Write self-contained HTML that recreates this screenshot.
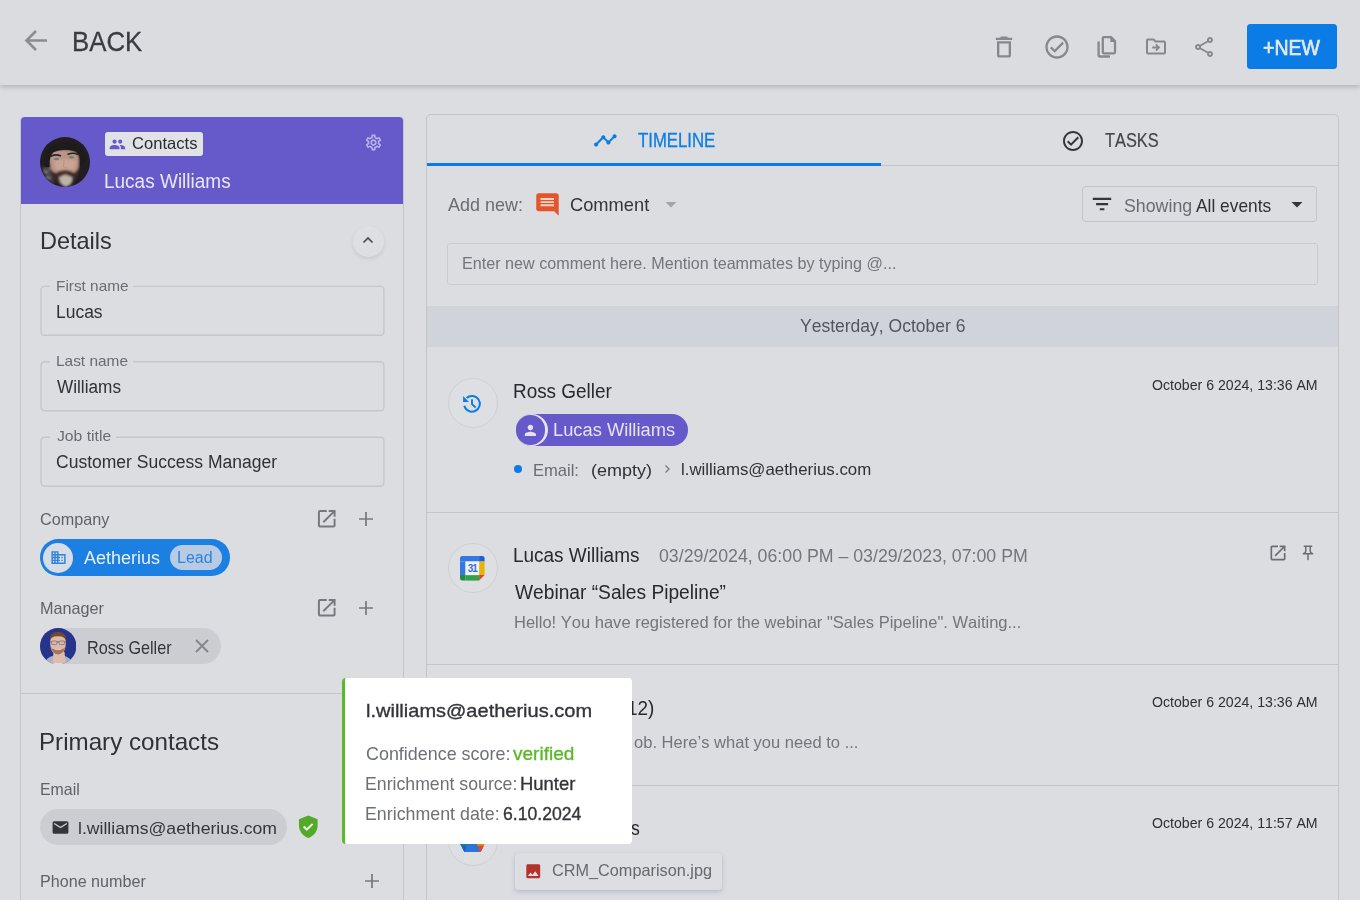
<!DOCTYPE html>
<html>
<head>
<meta charset="utf-8">
<style>
*{box-sizing:border-box;margin:0;padding:0}
html,body{width:1360px;height:900px;overflow:hidden;background:#dcdde0;font-family:"Liberation Sans",sans-serif;color:#2d2e33}
.a{position:absolute;white-space:nowrap;line-height:1;font-kerning:none}
svg{display:block}
#top{position:absolute;left:0;top:0;width:1360px;height:85px;background:#dbdcdf;box-shadow:0 2px 5px rgba(0,0,0,.19)}
#left{position:absolute;left:20px;top:117px;width:384px;height:800px;border:1px solid #c3c5ca;border-top:none;border-radius:4px 4px 0 0}
#lhead{position:absolute;left:21px;top:117px;width:382px;height:87px;background:#665acb;border-radius:4px 4px 0 0}
#right{position:absolute;left:426px;top:114px;width:913px;height:800px;border:1px solid #c3c5ca;border-radius:5px 5px 0 0}
.hl{position:absolute;height:1px;background:#c3c5ca}
.field{position:absolute;left:40px;width:345px;height:49px;border:1px solid #bfc1c6;border-radius:3px}
.flabel{position:absolute;background:#dcdde0;color:#6a6c73;font-size:15px;line-height:1;padding:0 6px;white-space:nowrap}
.g{color:#6a6c73}
.ic{width:50px;height:50px;border-radius:50%;border:1px solid #cfd0d4;background:#dedfe2}
.t20{color:#28292e}
.t17{}
.dt{color:#2e2f33}
.pl{color:#6e7079}
.pb{color:#34353a;-webkit-text-stroke:.35px currentColor}
.fl{color:#6a6c73}
.fv{color:#303136}
.sl{color:#606268}
#back{left:71.89px;top:27.50px;font-size:28px;transform:scaleX(0.9207);transform-origin:0 0}
#contacts{left:131.66px;top:134.75px;font-size:16.5px;transform:scaleX(1.0050);transform-origin:0 0}
#lname{left:104.14px;top:171.00px;font-size:20px;transform:scaleX(0.9496);transform-origin:0 0}
#details{left:39.77px;top:228.50px;font-size:24px;transform:scaleX(0.9784);transform-origin:0 0}
#fl1{left:55.84px;top:278.75px;font-size:14.5px;transform:scaleX(1.0592);transform-origin:0 0}
#fv1{left:55.67px;top:303.00px;font-size:18px;transform:scaleX(0.9694);transform-origin:0 0}
#fl2{left:55.84px;top:353.75px;font-size:14.5px;transform:scaleX(1.0627);transform-origin:0 0}
#fv2{left:57.02px;top:378.00px;font-size:18px;transform:scaleX(0.9553);transform-origin:0 0}
#fl3{left:56.85px;top:428.75px;font-size:14.5px;transform:scaleX(1.0835);transform-origin:0 0}
#fv3{left:56.21px;top:453.00px;font-size:18px;transform:scaleX(0.9735);transform-origin:0 0}
#company{left:40.18px;top:510.75px;font-size:16.5px;transform:scaleX(0.9836);transform-origin:0 0}
#aeth{left:84.36px;top:549.00px;font-size:18px;transform:scaleX(0.9979);transform-origin:0 0}
#lead{left:177.09px;top:549.50px;font-size:16px;transform:scaleX(0.9985);transform-origin:0 0}
#manager{left:39.67px;top:599.75px;font-size:16.5px;transform:scaleX(0.9828);transform-origin:0 0}
#ross{left:86.67px;top:639.25px;font-size:18.5px;transform:scaleX(0.8754);transform-origin:0 0}
#primary{left:38.92px;top:729.50px;font-size:24px;transform:scaleX(1.0070);transform-origin:0 0}
#emaill{left:39.60px;top:780.75px;font-size:16.5px;transform:scaleX(0.9639);transform-origin:0 0}
#email1{left:77.81px;top:820.00px;font-size:17px;transform:scaleX(1.0365);transform-origin:0 0}
#phone{left:39.58px;top:872.75px;font-size:16.5px;transform:scaleX(0.9774);transform-origin:0 0}
#timeline{left:637.72px;top:130.75px;font-size:19.5px;transform:scaleX(0.8595);transform-origin:0 0}
#tasks{left:1105.13px;top:130.75px;font-size:19.5px;transform:scaleX(0.8402);transform-origin:0 0}
#addnew{left:447.66px;top:195.00px;font-size:19px;transform:scaleX(0.9452);transform-origin:0 0}
#comment{left:570.47px;top:195.00px;font-size:19px;transform:scaleX(0.9624);transform-origin:0 0}
#showing{left:1123.79px;top:196.00px;font-size:19px;transform:scaleX(0.9351);transform-origin:0 0}
#allev{left:1196.27px;top:196.00px;font-size:19px;transform:scaleX(0.9124);transform-origin:0 0}
#placeholder{left:462.18px;top:254.75px;font-size:16.5px;transform:scaleX(0.9781);transform-origin:0 0}
#yesterday{left:799.72px;top:318.25px;font-size:17.5px;transform:scaleX(1.0006);transform-origin:0 0}
#ross2{left:513.05px;top:382.25px;font-size:19.5px;transform:scaleX(0.9696);transform-origin:0 0}
#lw2{left:552.80px;top:421.00px;font-size:18px;transform:scaleX(1.0170);transform-origin:0 0}
#emailk{left:533.24px;top:462.00px;font-size:17px;transform:scaleX(0.9732);transform-origin:0 0}
#empty{left:591.49px;top:462.00px;font-size:17px;transform:scaleX(1.0575);transform-origin:0 0}
#email2{left:681.27px;top:460.75px;font-size:16.5px;transform:scaleX(1.0207);transform-origin:0 0}
#lw3{left:513.44px;top:546.25px;font-size:19.5px;transform:scaleX(0.9724);transform-origin:0 0}
#range{left:659.21px;top:548.25px;font-size:17.5px;transform:scaleX(1.0134);transform-origin:0 0}
#webinar{left:514.92px;top:583.25px;font-size:19.5px;transform:scaleX(0.9832);transform-origin:0 0}
#hello{left:513.65px;top:613.75px;font-size:16.5px;transform:scaleX(1.0006);transform-origin:0 0}
#ptitle{left:365.55px;top:702.25px;font-size:18.5px;transform:scaleX(1.0818);transform-origin:0 0}
#p1a{left:365.99px;top:744.00px;font-size:19px;transform:scaleX(0.9426);transform-origin:0 0}
#p1b{left:513.14px;top:744.00px;font-size:19px;transform:scaleX(1.0007);transform-origin:0 0}
#p2a{left:365.45px;top:774.00px;font-size:19px;transform:scaleX(0.9309);transform-origin:0 0}
#p2b{left:520.39px;top:774.00px;font-size:19px;transform:scaleX(0.9718);transform-origin:0 0}
#p3a{left:365.44px;top:804.00px;font-size:19px;transform:scaleX(0.9370);transform-origin:0 0}
#p3b{left:502.80px;top:804.00px;font-size:19px;transform:scaleX(0.9277);transform-origin:0 0}
#e3t{left:627.33px;top:699.25px;font-size:19.5px;transform:scaleX(0.9700);transform-origin:0 0}
#e3b{left:633.74px;top:733.75px;font-size:16.5px;transform:scaleX(1.0030);transform-origin:0 0}
#e4t{left:631.41px;top:819.25px;font-size:19.5px;transform:scaleX(0.9056);transform-origin:0 0}
#newtxt{left:1262.65px;top:36.50px;font-size:22px;transform:scaleX(0.8854);transform-origin:0 0}
#d1{left:1152.23px;top:377.75px;font-size:14.5px;transform:scaleX(0.9738);transform-origin:0 0}
#d3{left:1152.23px;top:694.75px;font-size:14.5px;transform:scaleX(0.9738);transform-origin:0 0}
#d4{left:1152.23px;top:815.75px;font-size:14.5px;transform:scaleX(0.9738);transform-origin:0 0}
#crm{left:552.37px;top:861.75px;font-size:16.5px;transform:scaleX(0.9856);transform-origin:0 0}
</style>
</head>
<body>
<!-- TOP BAR -->
<div id="top"></div>
<svg class="a" style="left:24px;top:28px" width="25" height="25" viewBox="0 0 25 25"><path d="M23 12.5H3M12 3L2.5 12.5L12 22" fill="none" stroke="#8b8c91" stroke-width="2.6"/></svg>
<div class="a" id="back" style="color:#3a3b40;-webkit-text-stroke:.3px #3a3b40">BACK</div>
<!-- trash -->
<svg class="a" style="left:990px;top:32.500px" width="28" height="28" viewBox="0 0 24 24"><path fill="#87888d" d="M15 4V3H9v1H5v2h14V4h-4zM6 19c0 1.100.9 2 2 2h8c1.100 0 2-.9 2-2V7H6v12zM8 9h8v10H8V9z"/></svg>
<!-- check circle -->
<svg class="a" style="left:1043px;top:32.500px" width="28" height="28" viewBox="0 0 24 24"><path fill="#87888d" d="M12 2C6.480 2 2 6.480 2 12s4.480 10 10 10 10-4.480 10-10S17.520 2 12 2zm0 18c-4.410 0-8-3.590-8-8s3.590-8 8-8 8 3.590 8 8-3.590 8-8 8zm4.590-12.420L10 14.170l-2.590-2.580L6 13l4 4 8-8-1.410-1.420z"/></svg>
<!-- copy -->
<svg class="a" style="left:1094px;top:33px" width="26" height="28" viewBox="0 0 26 28"><path d="M9.800 4.100h7.200l4 4v11.200a1 1 0 0 1-1 1H9.800a1 1 0 0 1-1-1V5.100a1 1 0 0 1 1-1z" fill="none" stroke="#87888d" stroke-width="2.300" stroke-linejoin="round"/><path d="M16.300 3.500l5.500 5.500h-5.500z" fill="#87888d"/><path d="M4.600 8.500v14a1 1 0 0 0 1 1H16" fill="none" stroke="#87888d" stroke-width="2.300"/></svg>
<!-- folder move -->
<svg class="a" style="left:1143.800px;top:36.400px" width="24" height="24" viewBox="0 0 24 24"><g transform="translate(0 -1.500)"><path fill="#87888d" d="M20 6h-8l-2-2H4c-1.100 0-1.990.9-1.990 2L2 18c0 1.100.9 2 2 2h16c1.100 0 2-.9 2-2V8c0-1.100-.9-2-2-2zm0 12H4V6h5.170l2 2H20v10z"/><path d="M8.200 13h6.500M11.800 9.800L15 13l-3.200 3.200" fill="none" stroke="#87888d" stroke-width="1.800"/></g></svg>
<!-- share -->
<svg class="a" style="left:1192px;top:34.600px" width="24" height="24" viewBox="0 0 24 24"><path fill="#87888d" d="M18 16.080c-.760 0-1.440.3-1.960.770L8.910 12.700c.050-.230.090-.460.090-.7s-.040-.470-.090-.7l7.050-4.110c.540.5 1.250.810 2.040.810 1.660 0 3-1.340 3-3s-1.340-3-3-3-3 1.340-3 3c0 .240.040.470.090.7L8.040 9.810C7.500 9.310 6.790 9 6 9c-1.660 0-3 1.340-3 3s1.340 3 3 3c.790 0 1.500-.310 2.040-.810l7.120 4.160c-.050.210-.080.430-.080.650 0 1.610 1.310 2.920 2.920 2.920s2.920-1.310 2.920-2.920-1.310-2.920-2.920-2.920zM18 4c.550 0 1 .450 1 1s-.450 1-1 1-1-.450-1-1 .450-1 1-1zM6 13c-.550 0-1-.450-1-1s.450-1 1-1 1 .450 1 1-.450 1-1 1zm12 7.020c-.550 0-1-.450-1-1s.450-1 1-1 1 .450 1 1-.450 1-1 1z"/></svg>
<div class="a" style="left:1246.500px;top:24.200px;width:90.600px;height:44.600px;background:#0b7ce5;border-radius:3.500px"></div><div class="a" id="newtxt" style="color:#e4e8f0;-webkit-text-stroke:.7px #e4e8f0">+NEW</div>

<!-- LEFT CARD -->
<div id="left"></div>
<div id="lhead"></div>
<!-- avatar 1 -->
<svg class="a" style="left:40.400px;top:137px" width="50" height="50" viewBox="0 0 50 50">
<defs><clipPath id="c1"><circle cx="25" cy="25" r="25"/></clipPath>
<filter id="b1" x="-20%" y="-20%" width="140%" height="140%"><feGaussianBlur stdDeviation="1.100"/></filter>
<filter id="b1s" x="-20%" y="-20%" width="140%" height="140%"><feGaussianBlur stdDeviation=".6"/></filter></defs>
<g clip-path="url(#c1)"><rect width="50" height="50" fill="#211d20"/>
<g filter="url(#b1)">
<path d="M2 30Q4 40 14 47L10 30Z" fill="#4b4a48"/>
<path d="M4 34l3 2M6 40l4 2M9 31l2 4" stroke="#a9a8a2" stroke-width="1.300"/>
<path d="M8.500 19Q9 12 24 12.500Q38 12 39 20Q40 30 37 38Q33 46 26 48Q17 47 12 36Q9 28 8.500 19Z" fill="#ba9485"/>
<path d="M14 24Q24 21 36 24Q35 30 33 33L17 33Q14 29 14 24Z" fill="#caa595"/>
<path d="M9 30Q11 42 20 48L30 49Q38 44 39 30Q36 36 32 36Q25 31.500 18 36Q13 36 9 30Z" fill="#3b2c27"/>
<path d="M17 36Q25 31 33 36Q30 34.500 25 35Q20 34.500 17 36Z" fill="#553a2e" stroke="#553a2e" stroke-width="1.500"/>
<path d="M19 40Q25 37 32 40Q33 47 26 50Q20 48 19 40Z" fill="#bdb3a8"/>
<path d="M21.500 38.200Q25.500 37 29.500 38.200Q25.500 39.800 21.500 38.200Z" fill="#c79a8c"/>
</g>
<g filter="url(#b1s)">
<path d="M4 22Q6 6 25 5Q44 6 46 24L40 30Q41 17 36 14.500Q25 11 14 15Q9 18 9.500 30L5 30Z" fill="#1f1b1e"/>
<path d="M10 19.500Q15 16.500 21 19" stroke="#2e221e" stroke-width="1.700" fill="none"/>
<path d="M27.500 17.500Q33 15 38 17.500" stroke="#2e221e" stroke-width="1.700" fill="none"/>
<ellipse cx="16.500" cy="22" rx="2.600" ry="1.200" fill="#6b8088"/>
<ellipse cx="31.500" cy="20.200" rx="2.600" ry="1.200" fill="#6b8088"/>
<path d="M24 23L23.500 30Q25 31.500 27.500 30" stroke="#a8806f" stroke-width=".8" fill="none" opacity=".7"/>
</g>
</g></svg>
<!-- contacts chip -->
<div class="a" style="left:105px;top:132px;width:98px;height:24px;background:#e1e2e5;border-radius:3px"></div>
<svg class="a" style="left:109.200px;top:135.800px" width="16.800" height="16.800" viewBox="0 0 24 24"><path fill="#665acb" d="M16 11c1.660 0 2.990-1.340 2.990-3S17.660 5 16 5c-1.660 0-3 1.340-3 3s1.340 3 3 3zm-8 0c1.660 0 2.990-1.340 2.990-3S9.660 5 8 5C6.340 5 5 6.340 5 8s1.340 3 3 3zm0 2c-2.330 0-7 1.170-7 3.500V19h14v-2.500c0-2.330-4.670-3.500-7-3.500zm8 0c-.290 0-.620.020-.970.050 1.160.840 1.970 1.970 1.970 3.450V19h6v-2.500c0-2.330-4.670-3.500-7-3.500z"/></svg>
<div class="a" id="contacts" style="color:#2b2c31">Contacts</div>
<!-- gear -->
<svg class="a" style="left:364px;top:133px" width="19" height="19" viewBox="0 0 24 24"><path fill="#b9b3ea" d="M19.430 12.980c.040-.320.070-.640.070-.980 0-.340-.030-.660-.070-.980l2.110-1.650c.190-.150.240-.420.120-.640l-2-3.460c-.090-.160-.260-.250-.440-.250-.060 0-.120.010-.170.030l-2.490 1c-.520-.4-1.080-.730-1.690-.980l-.380-2.650C14.460 2.180 14.250 2 14 2h-4c-.250 0-.460.180-.490.420l-.380 2.650c-.610.250-1.170.590-1.690.980l-2.490-1c-.060-.020-.120-.030-.180-.030-.170 0-.340.090-.430.250l-2 3.460c-.130.220-.070.490.120.640l2.110 1.650c-.040.320-.070.650-.070.980 0 .330.030.660.070.980l-2.110 1.650c-.190.150-.240.420-.120.640l2 3.460c.090.160.260.250.440.250.060 0 .120-.010.170-.030l2.490-1c.520.4 1.080.730 1.690.980l.380 2.650c.030.240.240.420.490.420h4c.250 0 .460-.180.490-.420l.380-2.650c.610-.250 1.170-.590 1.690-.980l2.490 1c.060.020.120.030.180.030.170 0 .340-.090.430-.250l2-3.460c.120-.220.070-.490-.120-.640l-2.110-1.650zm-1.980-1.710c.040.310.050.520.050.730 0 .210-.020.430-.050.730l-.140 1.130.890.700 1.080.840-.7 1.210-1.270-.510-1.040-.420-.9.680c-.430.320-.840.560-1.250.730l-1.060.430-.160 1.130-.2 1.350h-1.400l-.190-1.350-.160-1.130-1.060-.430c-.430-.180-.830-.410-1.230-.710l-.910-.7-1.060.430-1.270.510-.7-1.210 1.080-.840.890-.7-.140-1.130c-.030-.310-.050-.540-.050-.740s.020-.430.050-.730l.140-1.130-.890-.7-1.080-.840.7-1.210 1.270.510 1.040.420.900-.680c.430-.320.840-.560 1.250-.730l1.060-.430.160-1.130.2-1.350h1.390l.190 1.350.160 1.130 1.060.430c.430.180.830.410 1.230.710l.910.700 1.060-.430 1.270-.510.700 1.210-1.070.850-.890.700.14 1.130zM12 8c-2.210 0-4 1.790-4 4s1.790 4 4 4 4-1.790 4-4-1.790-4-4-4zm0 6c-1.100 0-2-.9-2-2s.9-2 2-2 2 .9 2 2-.9 2-2 2z"/></svg>
<div class="a" id="lname" style="color:#e9e7f7">Lucas Williams</div>

<div class="a" id="details" style="color:#303136">Details</div>
<div class="a" style="left:353px;top:225.500px;width:31px;height:31px;border-radius:50%;background:#dedfe2;box-shadow:0 2px 4px rgba(0,0,0,.09)"></div>
<svg class="a" style="left:362px;top:236px" width="12" height="8" viewBox="0 0 12 8"><path d="M1.500 6.500L6 2l4.500 4.500" fill="none" stroke="#4a4b50" stroke-width="1.700"/></svg>


<svg class="a" style="left:0;top:270px" width="420" height="230" viewBox="0 270 420 230"><g fill="none" stroke="#c6c7cc" stroke-width="1.400"><rect x="41" y="286.400" width="342.900" height="48.900" rx="3.500"/><rect x="41" y="361.800" width="342.900" height="48.900" rx="3.500"/><rect x="41" y="437.300" width="342.900" height="48.900" rx="3.500"/></g></svg>
<div class="a" style="left:50px;top:284px;width:83.200px;height:5px;background:#dcdde0"></div><div class="a fl" id="fl1">First name</div>
<div class="a fv" id="fv1">Lucas</div>

<div class="a" style="left:50px;top:360px;width:83px;height:5px;background:#dcdde0"></div><div class="a fl" id="fl2">Last name</div>
<div class="a fv" id="fv2">Williams</div>

<div class="a" style="left:50px;top:435px;width:66px;height:5px;background:#dcdde0"></div><div class="a fl" id="fl3">Job title</div>
<div class="a fv" id="fv3">Customer Success Manager</div>

<div class="a sl" id="company">Company</div>
<svg class="a oin" style="left:314.500px;top:507px" width="23.500" height="23.500" viewBox="0 0 24 24"><path fill="#77787e" d="M19 19H5V5h7V3H5c-1.110 0-2 .9-2 2v14c0 1.100.890 2 2 2h14c1.100 0 2-.9 2-2v-7h-2v7zM14 3v2h3.590l-9.830 9.830 1.410 1.410L19 6.410V10h2V3h-7z"/></svg>
<svg class="a" style="left:358px;top:511px" width="16" height="16" viewBox="0 0 16 16"><path d="M8 1v14M1 8h14" stroke="#77787e" stroke-width="1.700"/></svg>
<!-- company chip -->
<div class="a" style="left:40px;top:539.400px;width:190px;height:36.400px;border-radius:18.200px;background:#1c80e3"></div>
<div class="a" style="left:43px;top:542.800px;width:30px;height:30px;border-radius:50%;background:#d8dce6"></div>
<svg class="a" style="left:49.500px;top:549px" width="17" height="17" viewBox="0 0 24 24"><path fill="#2b83de" d="M12 7V3H2v18h20V7H12zM6 19H4v-2h2v2zm0-4H4v-2h2v2zm0-4H4V9h2v2zm0-4H4V5h2v2zm4 12H8v-2h2v2zm0-4H8v-2h2v2zm0-4H8V9h2v2zm0-4H8V5h2v2zm10 12h-8v-2h2v-2h-2v-2h2v-2h-2V9h8v10zm-2-8h-2v2h2v-2zm0 4h-2v2h2v-2z"/></svg>
<div class="a" id="aeth" style="color:#e8eef8">Aetherius</div>
<div class="a" style="left:170px;top:544.500px;width:52.400px;height:25.500px;border-radius:13px;background:#b9cae4"></div>
<div class="a" id="lead" style="color:#2c83dc">Lead</div>

<div class="a sl" id="manager">Manager</div>
<svg class="a oin" style="left:314.500px;top:596px" width="23.500" height="23.500" viewBox="0 0 24 24"><path fill="#77787e" d="M19 19H5V5h7V3H5c-1.110 0-2 .9-2 2v14c0 1.100.890 2 2 2h14c1.100 0 2-.9 2-2v-7h-2v7zM14 3v2h3.590l-9.830 9.830 1.410 1.410L19 6.410V10h2V3h-7z"/></svg>
<svg class="a" style="left:358px;top:600px" width="16" height="16" viewBox="0 0 16 16"><path d="M8 1v14M1 8h14" stroke="#77787e" stroke-width="1.700"/></svg>
<!-- manager chip -->
<div class="a" style="left:40px;top:628px;width:181px;height:36px;border-radius:18px;background:#cccdd3"></div>
<svg class="a" style="left:40.100px;top:627.600px" width="36.400" height="36.400" viewBox="0 0 36.400 36.400">
<defs><clipPath id="c2"><circle cx="18.200" cy="18.200" r="18.200"/></clipPath>
<filter id="b2" x="-20%" y="-20%" width="140%" height="140%"><feGaussianBlur stdDeviation=".7"/></filter></defs>
<g clip-path="url(#c2)"><rect width="37" height="37" fill="#27348b"/>
<g filter="url(#b2)">
<path d="M4 37Q6 29 14 27.500L18 33L23 27.500Q31 29 33 37Z" fill="#a9b3c6"/>
<path d="M13.500 24L12.500 37H26L24.500 24Z" fill="#dcbcae"/>
<path d="M11 36.500h16" stroke="#e4e4e6" stroke-width="2.500"/>
<path d="M10.200 14Q10 6.500 18 6.500Q26 6.500 25.800 14Q26 21 23 24.500Q18 28 13 24.500Q10 21 10.200 14Z" fill="#dcb9aa"/>
<path d="M9.800 13Q9 4 18 3.800Q26.500 4 26 13Q25 8 18 8.300Q11 8 9.800 13Z" fill="#71492f"/>
<path d="M11 19Q12 25.500 18 26.500Q24 25.500 25 19Q23 22.500 18 21.500Q13 22.500 11 19Z" fill="#a8735c"/>
<path d="M15 21Q18 23 21 21Q18 22 15 21Z" fill="#e9d6cc" stroke="#e9d6cc" stroke-width=".4"/>
<path d="M10.500 13.800H25.500" stroke="#5a4a50" stroke-width=".7"/>
<rect x="11.500" y="13" width="5.500" height="3.600" rx="1.400" fill="#d3b9b0" stroke="#6a5a5e" stroke-width=".6"/>
<rect x="19" y="13" width="5.500" height="3.600" rx="1.400" fill="#d3b9b0" stroke="#6a5a5e" stroke-width=".6"/>
</g></g></svg>
<div class="a" id="ross" style="color:#34353a">Ross Geller</div>
<svg class="a" style="left:195px;top:639px" width="14" height="14" viewBox="0 0 14 14"><path d="M1 1l12 12M13 1L1 13" stroke="#84858b" stroke-width="1.800"/></svg>

<div class="hl" style="left:21px;top:693px;width:382px"></div>
<div class="a" id="primary" style="color:#303136">Primary contacts</div>
<div class="a sl" id="emaill">Email</div>
<div class="a" style="left:40px;top:809px;width:247px;height:36px;border-radius:18px;background:#cccdd3"></div>
<svg class="a" style="left:51px;top:818px" width="19" height="19" viewBox="0 0 24 24"><path fill="#34353a" d="M20 4H4c-1.100 0-1.990.9-1.990 2L2 18c0 1.100.9 2 2 2h16c1.100 0 2-.9 2-2V6c0-1.100-.9-2-2-2zm0 4l-8 5-8-5V6l8 5 8-5v2z"/></svg>
<div class="a" id="email1" style="color:#34353a">l.williams@aetherius.com</div>
<!-- shield -->
<svg class="a" style="left:298.200px;top:815px" width="20.600" height="23.600" viewBox="0 0 21 25" preserveAspectRatio="none"><path d="M10.500 0.500L1 4.500v7c0 6 4 11 9.500 13 5.500-2 9.500-7 9.500-13v-7z" fill="#54a82a"/><path d="M5.800 12.200l3.200 3.200 6-6" fill="none" stroke="#e9f3e2" stroke-width="2.200"/></svg>
<div class="a sl" id="phone">Phone number</div>
<svg class="a" style="left:364px;top:873px" width="16" height="16" viewBox="0 0 16 16"><path d="M8 1v14M1 8h14" stroke="#77787e" stroke-width="1.700"/></svg>

<!-- RIGHT PANEL -->
<div id="right"></div>
<div class="hl" style="left:427px;top:165px;width:911px"></div>
<div class="a" style="left:427px;top:163px;width:454px;height:3px;background:#0b7ce5"></div>
<svg class="a" style="left:592.800px;top:128.200px" width="24.700" height="24.700" viewBox="0 0 24 24"><path fill="#0b7ce5" d="M23 8c0 1.100-.9 2-2 2-.180 0-.350-.020-.510-.070l-3.560 3.550c.050.160.070.340.070.520 0 1.100-.9 2-2 2s-2-.9-2-2c0-.180.020-.360.070-.520l-2.550-2.550c-.160.050-.340.070-.520.070s-.360-.020-.520-.070l-4.550 4.560c.050.160.070.330.070.510 0 1.100-.9 2-2 2s-2-.9-2-2 .9-2 2-2c.180 0 .350.020.510.070l4.560-4.550C8.020 9.360 8 9.180 8 9c0-1.100.9-2 2-2s2 .9 2 2c0 .180-.020.360-.070.520l2.550 2.550c.160-.050.340-.070.520-.070s.360.020.520.070l3.550-3.560C19.020 8.350 19 8.180 19 8c0-1.100.9-2 2-2s2 .9 2 2z" transform="translate(0 0)"/></svg>
<div class="a" id="timeline" style="color:#0b7ce5;-webkit-text-stroke:.3px #0b7ce5">TIMELINE</div>
<svg class="a" style="left:1060.700px;top:128.600px" width="24" height="24" viewBox="0 0 24 24"><path fill="#35363b" d="M12 2C6.480 2 2 6.480 2 12s4.480 10 10 10 10-4.480 10-10S17.520 2 12 2zm0 18c-4.410 0-8-3.590-8-8s3.590-8 8-8 8 3.590 8 8-3.590 8-8 8zm4.590-12.420L10 14.170l-2.590-2.580L6 13l4 4 8-8-1.410-1.420z"/></svg>
<div class="a" id="tasks" style="color:#45464b;-webkit-text-stroke:.2px #45464b">TASKS</div>

<div class="a g" id="addnew">Add new:</div>
<svg class="a" style="left:533.800px;top:190.900px" width="27" height="27" viewBox="0 0 24 24"><path fill="#e2562a" d="M21.990 4c0-1.100-.890-2-1.990-2H4c-1.100 0-2 .9-2 2v12c0 1.100.9 2 2 2h14l4 4-.010-18z"/><path d="M5.800 7.100h12M5.800 9.900h12M5.800 12.700h12" stroke="#f0d3c9" stroke-width="1.700"/></svg>
<div class="a" id="comment" style="color:#34353a">Comment</div>
<svg class="a" style="left:665px;top:202px" width="12" height="6" viewBox="0 0 12 6"><path d="M0.500 0h11L6 5.500z" fill="#a3a4a9"/></svg>

<div class="a" style="left:1082px;top:186px;width:235px;height:36px;border:1px solid #c3c5ca;border-radius:4px"></div>
<svg class="a" style="left:1092px;top:196px" width="20" height="16" viewBox="0 0 20 16"><path d="M.8 2.900h18.400M4.100 8.100h12M7.800 13.200h4.600" stroke="#35363b" stroke-width="2.100"/></svg>
<div class="a" id="showing" style="color:#6a6c73">Showing</div><div class="a" id="allev" style="color:#303136">All events</div>
<svg class="a" style="left:1291px;top:202px" width="12" height="6" viewBox="0 0 12 6"><path d="M0.500 0h11L6 5.500z" fill="#35363b"/></svg>

<div class="a" style="left:447px;top:243px;width:871px;height:42px;border:1px solid #c9cbd0;border-radius:3px"></div>
<div class="a" id="placeholder" style="color:#73757b">Enter new comment here. Mention teammates by typing @...</div>

<div class="a" style="left:427px;top:306.300px;width:911px;height:41.200px;background:#d0d3da"></div>
<div class="a" id="yesterday" style="color:#54565c">Yesterday, October 6</div>

<!-- event 1 -->
<div class="a ic" style="left:447.500px;top:377.700px"></div>
<svg class="a" style="left:452px;top:384px" width="40" height="40" viewBox="0 0 40 40"><path d="M12.300 21.800A7.900 7.900 0 1 0 14.600 14" fill="none" stroke="#0b7ce5" stroke-width="2"/><path d="M11.100 12v5.900h5.900z" fill="#0b7ce5"/><path d="M20 15.300v4.900l3.600 3.300" fill="none" stroke="#0b7ce5" stroke-width="1.900"/></svg>
<div class="a t20" id="ross2">Ross Geller</div>
<div class="a dt" id="d1">October 6 2024, 13:36 AM</div>
<div class="a" style="left:516px;top:414px;width:172px;height:32px;border-radius:16px;background:#665acb"></div>
<div class="a" style="left:516px;top:414px;width:32px;height:32px;border-radius:50%;background:#e4e2f3"></div>
<div class="a" style="left:515.500px;top:415.200px;width:29.600px;height:29.600px;border-radius:50%;background:#665acb"></div>
<svg class="a" style="left:521.800px;top:421.600px" width="16.800" height="16.800" viewBox="0 0 24 24"><path fill="#e4e2f3" d="M12 12c2.210 0 4-1.790 4-4s-1.790-4-4-4-4 1.790-4 4 1.790 4 4 4zm0 2c-2.670 0-8 1.340-8 4v2h16v-2c0-2.660-5.330-4-8-4z"/></svg>
<div class="a" id="lw2" style="color:#e4e2f3">Lucas Williams</div>
<div class="a" style="left:514px;top:465px;width:8px;height:8px;border-radius:50%;background:#0b7ce5"></div>
<div class="a t17 g" id="emailk">Email:</div>
<div class="a t17" id="empty" style="color:#303136">(empty)</div>
<svg class="a" style="left:664px;top:464px" width="7" height="10" viewBox="0 0 7 10"><path d="M1.500 1.500L5 5 1.500 8.500" fill="none" stroke="#77787e" stroke-width="1.300"/></svg>
<div class="a t17" id="email2" style="color:#303136">l.williams@aetherius.com</div>
<div class="hl" style="left:427px;top:512px;width:911px"></div>

<!-- event 2 -->
<div class="a ic" style="left:447.700px;top:542.700px"></div>
<svg class="a" style="left:460.400px;top:556.100px" width="24.600" height="24.600" viewBox="0 0 24.600 24.600">
<path d="M2.500 0H19.100V5.500H0V2.500A2.500 2.500 0 0 1 2.500 0z" fill="#3478e3"/><rect x="0" y="5.500" width="5.500" height="13.600" fill="#3478e3"/>
<path d="M19.100 0H22.100A2.500 2.500 0 0 1 24.600 2.500V5.500H19.100z" fill="#1a62d0"/>
<rect x="19.100" y="5.500" width="5.500" height="13.600" fill="#eab308"/>
<path d="M0 19.100H5.500V24.600H2.500A2.500 2.500 0 0 1 0 22.100z" fill="#1f8e3e"/><rect x="5.500" y="19.100" width="13.600" height="5.500" fill="#2fa24c"/>
<path d="M19.100 19.100H24.600L19.100 24.600z" fill="#e2432e"/>
<rect x="5.500" y="5.500" width="13.600" height="13.600" fill="#eef1f6"/>
<text x="12.300" y="15.900" font-family="Liberation Sans" font-weight="bold" font-size="10" fill="#3b6fd4" text-anchor="middle" letter-spacing="-.9">31</text></svg>
<div class="a t20" id="lw3">Lucas Williams</div>
<div class="a t17 g" id="range" style="color:#73757b">03/29/2024, 06:00 PM – 03/29/2023, 07:00 PM</div>
<svg class="a" style="left:1267.500px;top:542.500px" width="20" height="20" viewBox="0 0 24 24"><path fill="#6c6d73" d="M19 19H5V5h7V3H5c-1.110 0-2 .9-2 2v14c0 1.100.890 2 2 2h14c1.100 0 2-.9 2-2v-7h-2v7zM14 3v2h3.590l-9.830 9.830 1.410 1.410L19 6.410V10h2V3h-7z"/></svg>
<svg class="a" style="left:1299px;top:543.600px" width="18" height="18" viewBox="0 0 24 24"><path fill="#6c6d73" d="M14 4v5c0 1.120.370 2.160 1 3H9c.650-.860 1-1.900 1-3V4h4m3-2H7c-.550 0-1 .450-1 1s.450 1 1 1h1v5c0 1.660-1.340 3-3 3v2h5.970v7l1 1 1-1v-7H19v-2c-1.660 0-3-1.340-3-3V4h1c.550 0 1-.450 1-1s-.450-1-1-1z"/></svg>
<div class="a t20" id="webinar">Webinar “Sales Pipeline”</div>
<div class="a t17" id="hello" style="color:#73757b">Hello! You have registered for the webinar "Sales Pipeline". Waiting...</div>
<div class="hl" style="left:427px;top:664px;width:911px"></div>

<!-- event 3 -->
<div class="a ic" style="left:447px;top:695px"></div>
<div class="a t20" id="e3t">12)</div>
<div class="a t17" id="e3b" style="color:#73757b">ob. Here’s what you need to ...</div>
<div class="a dt" id="d3">October 6 2024, 13:36 AM</div>
<div class="hl" style="left:427px;top:785px;width:911px"></div>

<!-- event 4 -->
<div class="a ic" style="left:447.900px;top:815.700px"></div>
<svg class="a" style="left:458px;top:838px" width="30" height="16" viewBox="0 0 30 16"><path d="M1.800 5H26.900L22.700 14H6.300z" fill="#2b74d8"/><path d="M1.800 5L6.300 14 8.500 9.500 6 5z" fill="#1d5fc9"/><path d="M2 5H10L9.700 7.600H3.200z" fill="#0f8a7a"/><path d="M19.200 5H26.900L25.800 8H19.200z" fill="#e8890c"/><path d="M19.600 7.800H25.900L22.700 14H21.800z" fill="#e0452f"/></svg>
<div class="a t20" id="e4t">s</div>
<div class="a dt" id="d4">October 6 2024, 11:57 AM</div>
<div class="a" style="left:515px;top:853px;width:207px;height:36.500px;border-radius:4px;background:#dddee1;box-shadow:0 2px 5px rgba(80,100,150,.26),0 0 1px rgba(0,0,0,.10)"></div>
<svg class="a" style="left:523.800px;top:861.900px" width="18.500" height="18.500" viewBox="0 0 24 24"><path fill="#b5322b" d="M21 19V5c0-1.100-.9-2-2-2H5c-1.100 0-2 .9-2 2v14c0 1.100.9 2 2 2h14c1.100 0 2-.9 2-2zM8.500 13.500l2.500 3.010L14.500 12l4.500 6H5l3.500-4.500z"/></svg>
<div class="a" id="crm" style="color:#66686e">CRM_Comparison.jpg</div>

<!-- POPUP -->
<div class="a" id="popup" style="left:342px;top:678px;width:290px;height:166px;background:#fff;border-left:3px solid #5bb82a;border-radius:4px"></div>
<div class="a" id="ptitle" style="color:#34353a;-webkit-text-stroke:.35px #34353a">l.williams@aetherius.com</div>
<div class="a pl" id="p1a">Confidence score:</div><div class="a pb" id="p1b" style="color:#5bb82a">verified</div>
<div class="a pl" id="p2a">Enrichment source:</div><div class="a pb" id="p2b">Hunter</div>
<div class="a pl" id="p3a">Enrichment date:</div><div class="a pb" id="p3b">6.10.2024</div>
</body>
</html>
